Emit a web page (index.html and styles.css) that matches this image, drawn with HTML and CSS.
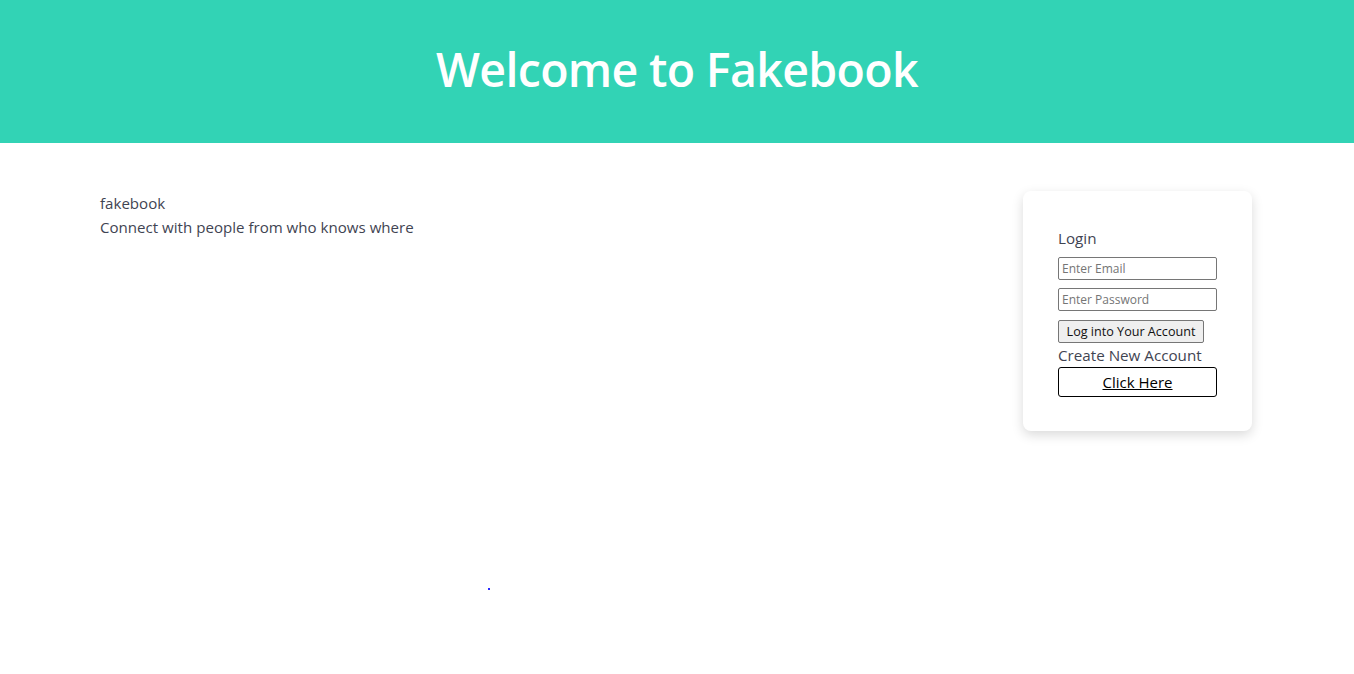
FILE: index.html
```html
<!DOCTYPE html>
<html>
<head>
<meta charset="utf-8">
<link rel="stylesheet" href="styles.css">
</head>
<body>
<header class="banner">
  <h1 class="banner-title">Welcome to Fakebook</h1>
</header>
<main class="content">
  <section class="intro">
    <div class="brand">fakebook</div>
    <div class="tagline">Connect with people from who knows where</div>
  </section>
  <section class="card">
    <div class="card-title">Login</div>
    <input class="field" type="email" placeholder="Enter Email">
    <input class="field" type="password" placeholder="Enter Password">
    <button class="login-btn">Log into Your Account</button>
    <div class="create">Create New Account</div>
    <a class="click-here" href="#">Click Here</a>
  </section>
</main>
<span class="dot"></span>
</body>
</html>
```
FILE: styles.css
```css
* { box-sizing: border-box; }
body {
  margin: 0;
  font-family: "Open Sans", "Noto Sans", sans-serif;
  color: #3f4452;
  background: #fff;
  position: relative;
  min-height: 674px;
}
.banner {
  background: #32d3b5;
  height: 143px;
  display: flex;
  align-items: center;
  justify-content: center;
  padding-bottom: 6px;
}
.banner-title {
  margin: 0;
  color: #fff;
  font-size: 46.5px;
  font-weight: 600;
  letter-spacing: -0.68px;
}
.content {
  display: flex;
  justify-content: space-between;
  align-items: flex-start;
  padding: 48px 102px 0 100px;
}
.intro {
  font-size: 15.1px;
  line-height: 24px;
}
.card {
  width: 229px;
  background: #fff;
  border-radius: 8px;
  box-shadow: 0 4px 12px rgba(0,0,0,0.15);
  padding: 35px 35px 34px 35px;
  display: flex;
  flex-direction: column;
  align-items: flex-start;
}
.card-title {
  font-size: 15.2px;
  line-height: 24px;
  margin-bottom: 7px;
}
.field {
  width: 159px;
  height: 23px;
  border: 1px solid #767676;
  border-radius: 2px;
  font-family: inherit;
  font-size: 12px;
  padding: 0 3px;
  margin: 0 0 8px 0;
  color: #222;
}
.field::placeholder { color: #757575; }
.login-btn {
  margin-top: 1px;
  height: 23px;
  width: 146px;
  padding: 0;
  font-family: inherit;
  font-size: 12.6px;
  color: #111;
  background: #efefef;
  border: 1px solid #767676;
  border-radius: 2px;
}
.create {
  font-size: 15.2px;
  line-height: 24px;
}
.click-here {
  width: 159px;
  height: 30px;
  border: 1px solid #000;
  border-radius: 3px;
  display: flex;
  align-items: center;
  justify-content: center;
  color: #000;
  font-size: 15px;
  text-decoration: underline;
}
.dot {
  position: absolute;
  left: 488px;
  top: 588px;
  width: 2px;
  height: 2px;
  background: #2a2aff;
}
```
